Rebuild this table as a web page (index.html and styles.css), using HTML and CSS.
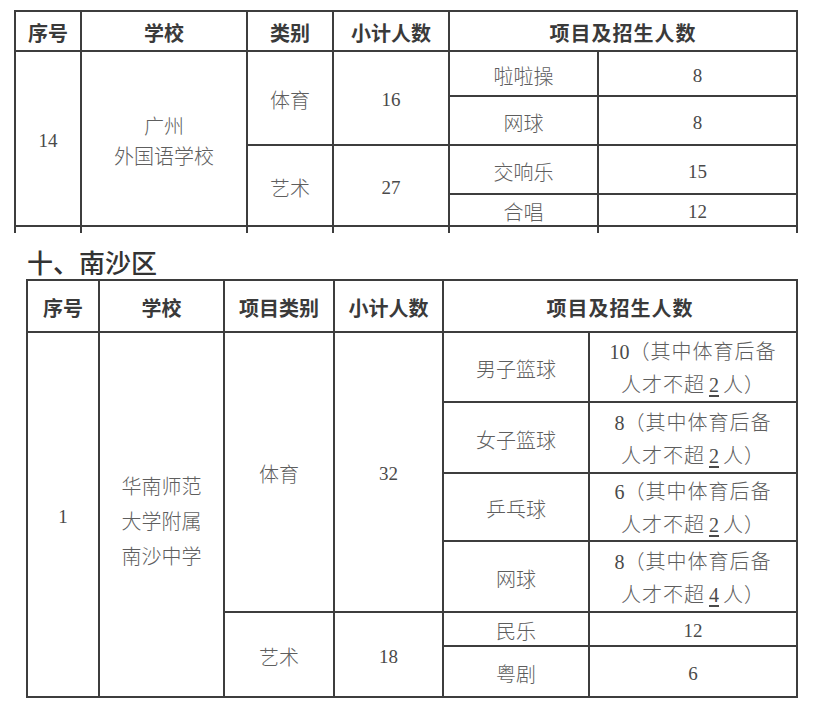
FILE: index.html
```html
<!DOCTYPE html>
<html lang="zh-CN">
<head>
<meta charset="utf-8">
<title>招生计划表</title>
<link rel="stylesheet" href="styles.css">
</head>
<body>
<div class="page">
  <div class="clip-top">
    <table class="grid grid-top">
      <colgroup>
        <col class="t1"><col class="t2"><col class="t3"><col class="t4"><col class="t5"><col class="t6">
      </colgroup>
      <tr class="th-row">
        <th>序号</th><th>学校</th><th>类别</th><th>小计人数</th><th colspan="2" class="wide">项目及招生人数</th>
      </tr>
      <tr class="r45">
        <td rowspan="4" class="num">14</td>
        <td rowspan="4" class="school school-top">广州<br>外国语学校</td>
        <td rowspan="2">体育</td>
        <td rowspan="2" class="num">16</td>
        <td>啦啦操</td><td class="num">8</td>
      </tr>
      <tr class="r49"><td>网球</td><td class="num">8</td></tr>
      <tr class="r49">
        <td rowspan="2">艺术</td>
        <td rowspan="2" class="num">27</td>
        <td>交响乐</td><td class="num">15</td>
      </tr>
      <tr class="r31"><td>合唱</td><td class="num">12</td></tr>
      <tr class="r45"><td></td><td></td><td></td><td></td><td></td><td></td></tr>
    </table>
  </div>

  <h2 class="section">十、南沙区</h2>

  <table class="grid grid-bottom">
    <colgroup>
      <col class="b1"><col class="b2"><col class="b3"><col class="b4"><col class="b5"><col class="b6">
    </colgroup>
    <tr class="th-row2">
      <th>序号</th><th>学校</th><th>项目类别</th><th>小计人数</th><th colspan="2" class="wide">项目及招生人数</th>
    </tr>
    <tr class="r70">
      <td rowspan="6" class="num">1</td>
      <td rowspan="6" class="school school-bottom">华南师范<br>大学附属<br>南沙中学</td>
      <td rowspan="4">体育</td>
      <td rowspan="4" class="num">32</td>
      <td>男子篮球</td>
      <td class="two"><span class="n">10</span>（其中体育后备<br>人才不超<span class="u">2</span>人）</td>
    </tr>
    <tr class="r71">
      <td>女子篮球</td>
      <td class="two"><span class="n">8</span>（其中体育后备<br>人才不超<span class="u">2</span>人）</td>
    </tr>
    <tr class="r68">
      <td>乒乓球</td>
      <td class="two"><span class="n">6</span>（其中体育后备<br>人才不超<span class="u">2</span>人）</td>
    </tr>
    <tr class="r71">
      <td>网球</td>
      <td class="two"><span class="n">8</span>（其中体育后备<br>人才不超<span class="u">4</span>人）</td>
    </tr>
    <tr class="r34">
      <td rowspan="2">艺术</td>
      <td rowspan="2" class="num">18</td>
      <td>民乐</td><td class="num">12</td>
    </tr>
    <tr class="r51"><td>粤剧</td><td class="num">6</td></tr>
  </table>
</div>
</body>
</html>
```

FILE: styles.css
```css
html, body {
  margin: 0;
  padding: 0;
  background: #ffffff;
}

.page {
  width: 821px;
  height: 707px;
  overflow: hidden;
  font-family: "Noto Sans CJK SC", "Noto Sans", sans-serif;
  color: #5e5e5e;
}

.clip-top {
  padding: 10px 0 0 14px;
  height: 223px;
  overflow: hidden;
}

.grid {
  border-collapse: collapse;
  table-layout: fixed;
}

.grid th,
.grid td {
  border: 2px solid #3d3d3d;
  padding: 0;
  text-align: center;
  vertical-align: middle;
  font-size: 20px;
  line-height: 26px;
}

.grid th {
  font-weight: 700;
  color: #3a3a3a;
  padding-top: 3px;
}

.grid td {
  font-weight: 300;
  padding-top: 4px;
}

.grid th.wide {
  letter-spacing: 1px;
}

.grid-top {
  width: 784px;
}

.t1 { width: 66px; }
.t2 { width: 166px; }
.t3 { width: 86px; }
.t4 { width: 116px; }
.t5 { width: 149px; }
.t6 { width: 199px; }

.th-row { height: 40px; }
.r45 { height: 45px; }
.r49 { height: 49px; }
.r31 { height: 31px; }

.grid td.num {
  font-family: "Liberation Serif", "DejaVu Serif", serif;
  font-weight: 400;
  color: #4a4a4a;
  font-size: 19px;
}

.grid td.school-top {
  line-height: 30px;
}

.section {
  margin: 14px 0 2px 27px;
  font-size: 26px;
  line-height: 30px;
  font-weight: 500;
  color: #333333;
  letter-spacing: 0;
}

.grid-bottom {
  margin-left: 26px;
  width: 772px;
}

.b1 { width: 72px; }
.b2 { width: 125px; }
.b3 { width: 110px; }
.b4 { width: 109px; }
.b5 { width: 146px; }
.b6 { width: 208px; }

.th-row2 { height: 52px; }
.r70 { height: 70px; }
.r71 { height: 71px; }
.r68 { height: 68px; }
.r34 { height: 34px; }
.r51 { height: 51px; }

.grid td.school-bottom {
  line-height: 35px;
  padding-top: 12px;
}

.grid td.two {
  line-height: 33px;
  letter-spacing: 1px;
  padding-top: 0;
}

.n {
  font-family: "Liberation Serif", "DejaVu Serif", serif;
  font-weight: 400;
  color: #4a4a4a;
  letter-spacing: 0;
  line-height: 16px;
}

.u {
  font-family: "Liberation Serif", "DejaVu Serif", serif;
  font-weight: 400;
  color: #4a4a4a;
  text-decoration: underline;
  text-decoration-thickness: 2px;
  text-underline-offset: 3px;
  margin: 0 4px;
  letter-spacing: 0;
  line-height: 16px;
}
```
